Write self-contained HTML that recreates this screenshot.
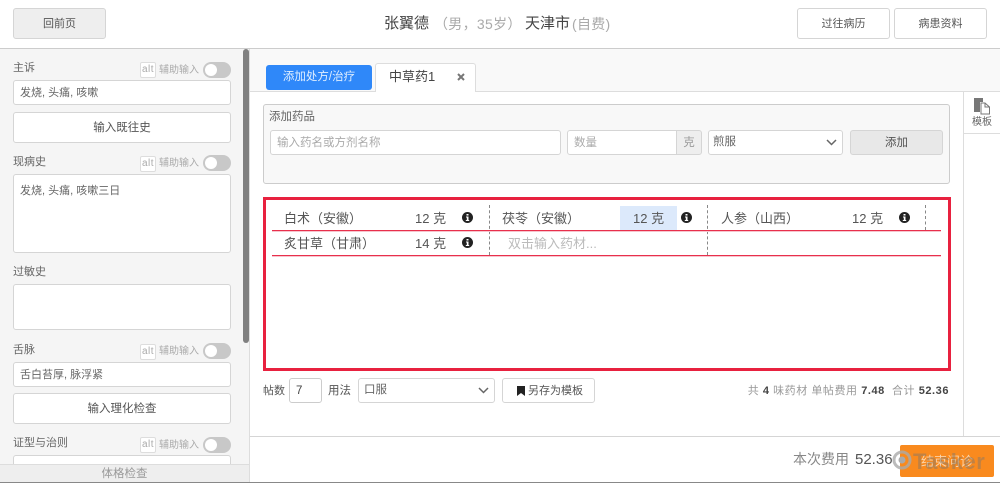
<!DOCTYPE html>
<html lang="zh"><head><meta charset="utf-8"><title>中草药</title>
<style>
html,body{margin:0;padding:0;width:1000px;height:483px;overflow:hidden;background:#fff}
body{position:relative;font-family:"Liberation Sans","Noto Sans CJK SC",sans-serif;color:#555;font-size:11.5px}
.a{position:absolute;box-sizing:border-box;white-space:nowrap}
.btn{background:#fff;border:1px solid #d5d5d5;border-radius:3px;text-align:center;color:#555}
.inp{background:#fff;border:1px solid #d5d5d5;border-radius:3px;color:#666}
.s11{font-size:11px}
.alt{width:16px;height:16px;border:1px solid #ddd;border-radius:2px;background:#fff;color:#aaa;font-size:10px;line-height:14px;text-align:center;letter-spacing:.5px}
.tg{width:28px;height:16px;border-radius:8px;background:#c8c8c8}
.tg:after{content:"";position:absolute;left:2px;top:2px;width:12px;height:12px;border-radius:6px;background:#fff}
.lb{color:#666;font-size:11px;line-height:16px}
.hp{color:#aaa;font-size:10px;line-height:16px}
.med{font-size:13px;color:#555;line-height:18px}
.dash{width:0;border-left:1px dashed #888}
.rl{height:1px;background:#e8304c;left:272px;width:669px;box-shadow:0 1px 0 #f7c4cd}
</style></head><body>

<!-- top bar -->
<div class="a btn s11" style="left:13px;top:8px;width:93px;height:31px;background:#eee;line-height:31px">回前页</div>
<div class="a" style="left:384px;top:13px;font-size:15px;line-height:22px;color:#444">张翼德</div>
<div class="a" style="left:434px;top:13px;font-size:14px;line-height:22px;color:#aaa;letter-spacing:.3px">（男，35岁）</div>
<div class="a" style="left:525px;top:13px;font-size:15px;line-height:22px;color:#444">天津市</div>
<div class="a" style="left:572px;top:13px;font-size:14px;line-height:22px;color:#aaa;letter-spacing:.3px">(自费)</div>
<div class="a btn s11" style="left:797px;top:8px;width:93px;height:31px;line-height:31px">过往病历</div>
<div class="a btn s11" style="left:894px;top:8px;width:93px;height:31px;line-height:31px">病患资料</div>
<div class="a" style="left:0;top:48px;width:1000px;height:1px;background:#ccc"></div>

<!-- sidebar -->
<div class="a" style="left:0;top:49px;width:250px;height:434px;background:#f5f5f5;border-right:1px solid #ddd"></div>
<div class="a" style="left:243px;top:49px;width:6px;height:294px;background:#808080;border-radius:3px"></div>

<div class="a lb" style="left:13px;top:60px">主诉</div>
<div class="a alt" style="left:140px;top:62px">alt</div>
<div class="a hp" style="left:159px;top:63px">辅助输入</div>
<div class="a tg" style="left:203px;top:62px"></div>
<div class="a inp s11" style="left:13px;top:80px;width:218px;height:25px;padding-left:6px;line-height:25px">发烧, 头痛, 咳嗽</div>
<div class="a btn" style="left:13px;top:112px;width:218px;height:31px;line-height:31px">输入既往史</div>

<div class="a lb" style="left:13px;top:154px">现病史</div>
<div class="a alt" style="left:140px;top:156px">alt</div>
<div class="a hp" style="left:159px;top:156px">辅助输入</div>
<div class="a tg" style="left:203px;top:155px"></div>
<div class="a inp s11" style="left:13px;top:174px;width:218px;height:79px;padding:7px 0 0 6px;line-height:18px">发烧, 头痛, 咳嗽三日</div>

<div class="a lb" style="left:13px;top:264px">过敏史</div>
<div class="a inp" style="left:13px;top:284px;width:218px;height:46px"></div>

<div class="a lb" style="left:13px;top:342px">舌脉</div>
<div class="a alt" style="left:140px;top:344px">alt</div>
<div class="a hp" style="left:159px;top:344px">辅助输入</div>
<div class="a tg" style="left:203px;top:343px"></div>
<div class="a inp s11" style="left:13px;top:362px;width:218px;height:25px;padding-left:6px;line-height:25px">舌白苔厚, 脉浮紧</div>
<div class="a btn" style="left:13px;top:393px;width:218px;height:31px;line-height:31px">输入理化检查</div>

<div class="a lb" style="left:13px;top:435px">证型与治则</div>
<div class="a alt" style="left:140px;top:437px">alt</div>
<div class="a hp" style="left:159px;top:438px">辅助输入</div>
<div class="a tg" style="left:203px;top:437px"></div>
<div class="a inp" style="left:13px;top:455px;width:218px;height:20px"></div>
<div class="a" style="left:0;top:464px;width:249px;height:18px;background:#eee;border-top:1px solid #ddd;text-align:center;color:#999;line-height:18px">体格检查</div>

<!-- tabs -->
<div class="a" style="left:250px;top:49px;width:750px;height:43px;background:#f9f9f9;border-bottom:1px solid #ddd"></div>
<div class="a" style="left:266px;top:65px;width:106px;height:25px;background:#2f88f9;border-radius:3px;color:#dfeeff;text-align:center;line-height:25px">添加处方/治疗</div>
<div class="a" style="left:375px;top:63px;width:101px;height:29px;background:#fff;border:1px solid #ddd;border-bottom:0;border-radius:3px 3px 0 0"></div>
<div class="a" style="left:389px;top:68px;font-size:13px;line-height:18px;color:#444">中草药1</div>
<svg class="a" style="left:457px;top:73px" width="8" height="8" viewBox="0 0 8 8"><path d="M1 1L7 7M7 1L1 7" stroke="#777" stroke-width="2"/></svg>

<!-- right rail -->
<div class="a" style="left:963px;top:92px;width:1px;height:344px;background:#ddd"></div>
<svg class="a" style="left:973px;top:97px" width="18" height="18" viewBox="0 0 18 18"><path d="M1 1H10V5H7V15H1Z" fill="#777"/><path d="M8 6H12L16.500 10V17H8Z" fill="#fff" stroke="#777" stroke-width="1"/><path d="M12 6V10H16" fill="none" stroke="#777"/></svg>
<div class="a" style="left:964px;top:115px;width:36px;text-align:center;font-size:10px;line-height:15px;color:#666">模板</div>
<div class="a" style="left:964px;top:133px;width:36px;height:1px;background:#ddd"></div>

<!-- add medicine panel -->
<div class="a" style="left:263px;top:104px;width:687px;height:80px;background:#f8f8f8;border:1px solid #ccc;border-radius:3px"></div>
<div class="a" style="left:269px;top:109px;line-height:16px;color:#666">添加药品</div>
<div class="a inp" style="left:270px;top:130px;width:291px;height:25px;padding-left:6px;line-height:25px;color:#aaa">输入药名或方剂名称</div>
<div class="a inp" style="left:567px;top:130px;width:110px;height:25px;padding-left:6px;line-height:25px;color:#aaa;border-radius:3px 0 0 3px">数量</div>
<div class="a" style="left:676px;top:130px;width:26px;height:25px;background:#eee;border:1px solid #d5d5d5;border-radius:0 3px 3px 0;text-align:center;line-height:24px;color:#999">克</div>
<div class="a inp" style="left:708px;top:130px;width:135px;height:25px;padding-left:4px;line-height:22px">煎服</div>
<svg class="a" style="left:825px;top:138px" width="13" height="9" viewBox="0 0 13 9"><path d="M2 2L6.500 6.500L11 2" fill="none" stroke="#666" stroke-width="1.500"/></svg>
<div class="a btn" style="left:850px;top:130px;width:93px;height:25px;background:#e8e8e8;line-height:25px">添加</div>

<!-- red box -->
<div class="a" style="left:263px;top:197px;width:688px;height:174px;border:3px solid #e8213f"></div>
<div class="a" style="left:620px;top:206px;width:57px;height:24px;background:#dce9fb"></div>
<div class="a dash" style="left:489px;top:205px;height:50px"></div>
<div class="a dash" style="left:707px;top:205px;height:50px"></div>
<div class="a dash" style="left:925px;top:205px;height:25px"></div>
<div class="a rl" style="top:230px"></div>
<div class="a rl" style="top:255px"></div>

<div class="a med" style="left:284px;top:210px">白术（安徽）</div>
<div class="a med" style="left:415px;top:210px">12 克</div>
<div class="a med" style="left:502px;top:210px">茯苓（安徽）</div>
<div class="a med" style="left:633px;top:210px">12 克</div>
<div class="a med" style="left:721px;top:210px">人参（山西）</div>
<div class="a med" style="left:852px;top:210px">12 克</div>
<div class="a med" style="left:284px;top:235px">炙甘草（甘肃）</div>
<div class="a med" style="left:415px;top:235px">14 克</div>
<div class="a med" style="left:508px;top:235px;color:#bbb">双击输入药材...</div>

<svg class="a" style="left:462px;top:212px" width="11" height="11" viewBox="0 0 11 11"><circle cx="5.500" cy="5.500" r="5.500" fill="#222"/><path d="M4.500 2H6.500V3.500H4.500ZM4 4.500H6.500V8H7.200V9H3.800V8H4.800V5.500H4Z" fill="#fff"/></svg>
<svg class="a" style="left:681px;top:212px" width="11" height="11" viewBox="0 0 11 11"><circle cx="5.500" cy="5.500" r="5.500" fill="#222"/><path d="M4.500 2H6.500V3.500H4.500ZM4 4.500H6.500V8H7.200V9H3.800V8H4.800V5.500H4Z" fill="#fff"/></svg>
<svg class="a" style="left:899px;top:212px" width="11" height="11" viewBox="0 0 11 11"><circle cx="5.500" cy="5.500" r="5.500" fill="#222"/><path d="M4.500 2H6.500V3.500H4.500ZM4 4.500H6.500V8H7.200V9H3.800V8H4.800V5.500H4Z" fill="#fff"/></svg>
<svg class="a" style="left:462px;top:237px" width="11" height="11" viewBox="0 0 11 11"><circle cx="5.500" cy="5.500" r="5.500" fill="#222"/><path d="M4.500 2H6.500V3.500H4.500ZM4 4.500H6.500V8H7.200V9H3.800V8H4.800V5.500H4Z" fill="#fff"/></svg>

<!-- lower form -->
<div class="a s11" style="left:263px;top:382px;line-height:18px">帖数</div>
<div class="a inp" style="left:289px;top:378px;width:33px;height:25px;padding-left:6px;line-height:24px;color:#444;border-color:#ccc">7</div>
<div class="a" style="left:328px;top:382px;line-height:18px">用法</div>
<div class="a inp" style="left:358px;top:378px;width:137px;height:25px;padding-left:5px;line-height:22px">口服</div>
<svg class="a" style="left:477px;top:386px" width="13" height="9" viewBox="0 0 13 9"><path d="M2 2L6.500 6.500L11 2" fill="none" stroke="#666" stroke-width="1.500"/></svg>
<div class="a btn" style="left:502px;top:378px;width:93px;height:25px"></div>
<svg class="a" style="left:517px;top:386px" width="8" height="10" viewBox="0 0 8 10"><path d="M0 0H8V10L4 7L0 10Z" fill="#222"/></svg>
<div class="a s11" style="left:528px;top:382px;line-height:18px">另存为模板</div>
<div class="a" style="right:51px;top:382px;font-size:11px;line-height:18px;color:#999;letter-spacing:.55px">共 <b style="color:#444">4</b> 味药材 单帖费用 <b style="color:#444">7.48</b> &nbsp;合计 <b style="color:#444">52.36</b></div>

<!-- footer -->
<div class="a" style="left:250px;top:436px;width:750px;height:1px;background:#d5d5d5"></div>
<div class="a" style="left:793px;top:449px;font-size:14px;line-height:20px;color:#888">本次费用</div>
<div class="a" style="left:855px;top:450px;font-size:15px;line-height:20px;color:#555">52.36</div>
<div class="a" style="left:900px;top:445px;width:94px;height:32px;background:#f98a1e;border-radius:2px;color:#fbd3a8;text-align:center;line-height:34px;font-size:13px">结束问诊</div>
<svg class="a" style="left:891px;top:449px" width="22" height="24" viewBox="0 0 22 24"><circle cx="11" cy="11" r="8" fill="none" stroke="#aaa" stroke-width="3" opacity=".8"/><circle cx="11" cy="11" r="3.500" fill="#aaa"/></svg>
<div class="a" style="left:913px;top:449px;font-size:22px;font-weight:bold;line-height:26px;color:#8a7a66;opacity:.5;letter-spacing:.5px">Tasker</div>
<div class="a" style="left:0;top:482px;width:1000px;height:1px;background:#888"></div>
</body></html>
